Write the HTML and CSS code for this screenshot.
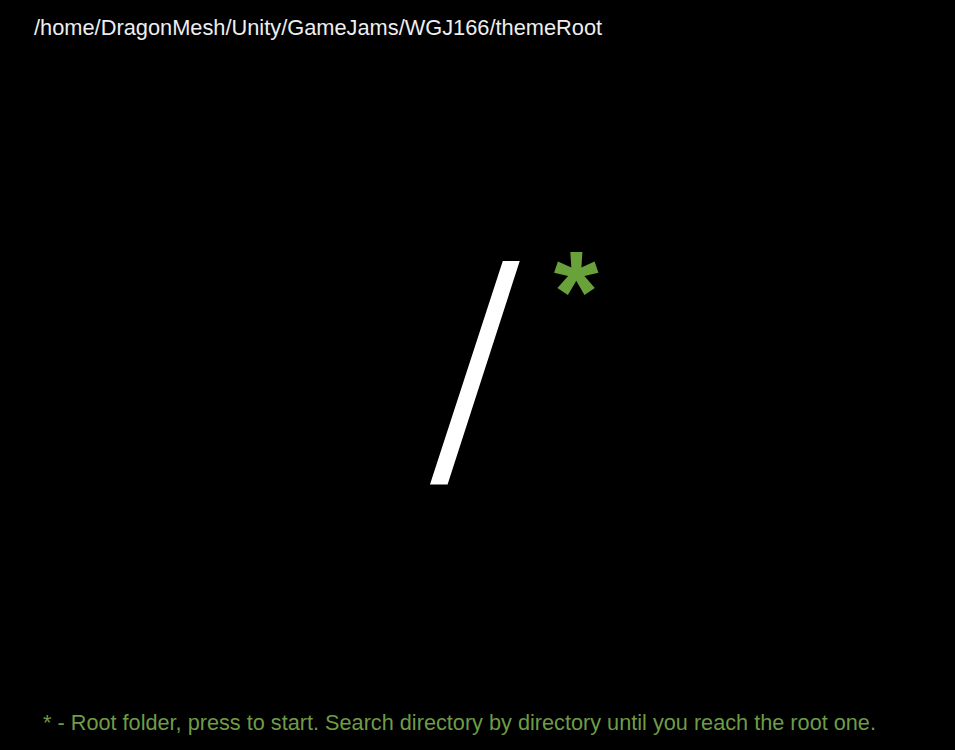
FILE: index.html
```html
<!DOCTYPE html>
<html>
<head>
<meta charset="utf-8">
<link rel="stylesheet" href="styles.css">
</head>
<body>
<div class="screen">
  <div class="path">/home/DragonMesh/Unity/GameJams/WGJ166/themeRoot</div>
  <div class="center">
    <div class="root">
      <span class="slash">/</span><span class="star">*</span>
    </div>
  </div>
  <div class="footer">* - Root folder, press to start. Search directory by directory until you reach the root one.</div>
</div>
</body>
</html>
```
FILE: styles.css
```css
html, body {
  margin: 0;
  padding: 0;
  background: #000;
}
.screen {
  width: 955px;
  height: 750px;
  display: flex;
  flex-direction: column;
  font-family: "Liberation Sans", Arial, sans-serif;
  color: #fff;
  overflow: hidden;
}
.path {
  height: 24px;
  padding: 16px 0 0 34px;
  font-size: 21.8px;
  line-height: 24px;
  color: #eeeeee;
  white-space: nowrap;
}
.center {
  flex: 1;
  display: flex;
  justify-content: center;
  align-items: flex-start;
}
.root {
  display: flex;
  align-items: flex-start;
  margin-top: 207px;
  margin-left: 75px;
}
.slash {
  font-size: 314px;
  line-height: 260px;
  color: #fff;
  -webkit-text-stroke: 7px #000;
  transform: skewX(-3deg);
}
.star {
  font-size: 115px;
  line-height: 115px;
  color: #69a13a;
  font-weight: bold;
  margin-left: 35px;
  margin-top: -13px;
}
.footer {
  padding: 0 0 15px 43px;
  font-size: 21.7px;
  line-height: 24px;
  color: #6f9b45;
  white-space: nowrap;
}
```
